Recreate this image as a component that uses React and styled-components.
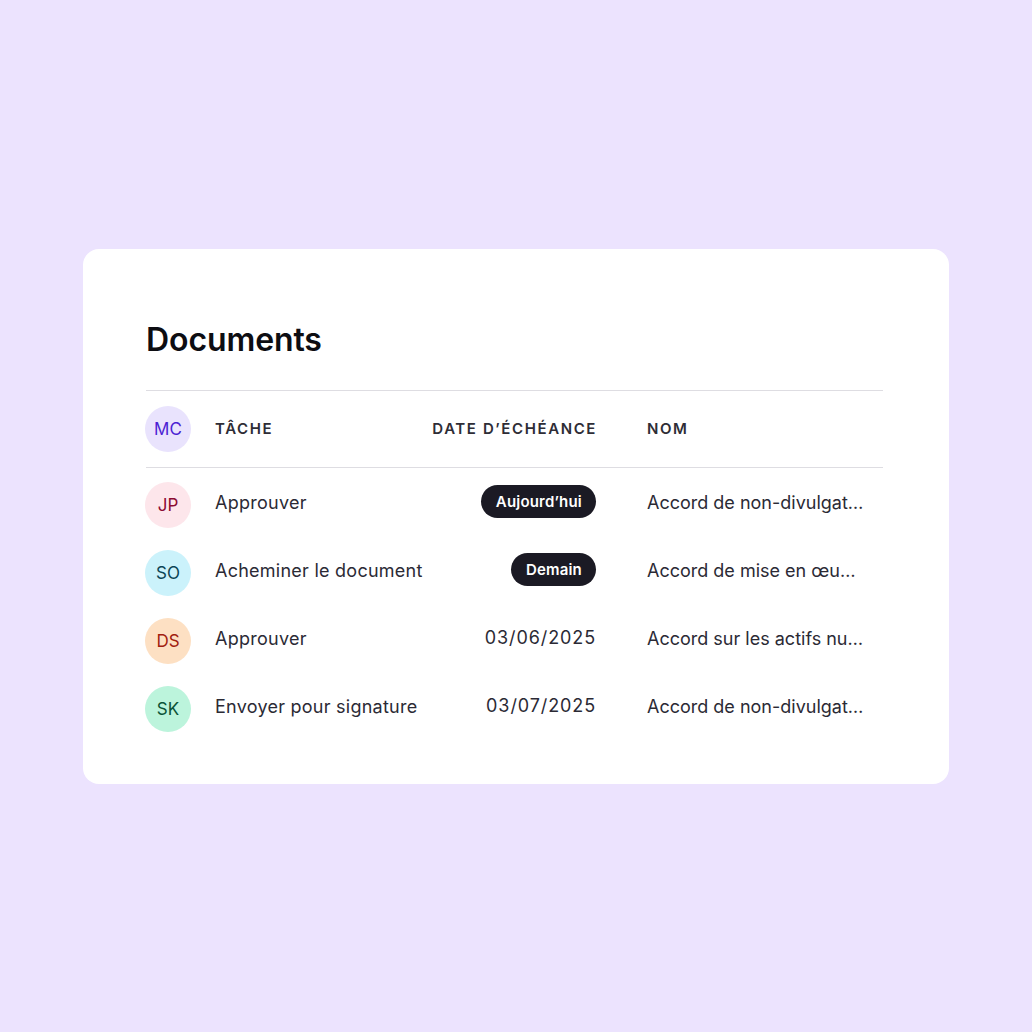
import styled, { createGlobalStyle } from "styled-components";

const GlobalStyle = createGlobalStyle`
  html, body {
    margin: 0;
    padding: 0;
    background: #ece3fe;
  }
  body {
    font-family: Inter, "Noto Sans", sans-serif;
    -webkit-font-smoothing: antialiased;
  }
`;

const AVATAR_COLORS = {
  violet: { bg: "#e9e3fd", fg: "#4c1fd3" },
  pink: { bg: "#fde6eb", fg: "#8c0b32" },
  cyan: { bg: "#cbf2fb", fg: "#0b4656" },
  orange: { bg: "#fde0c3", fg: "#a2200f" },
  green: { bg: "#bcf4dc", fg: "#0b5337" },
};

const rows = [
  { initials: "JP", color: "pink", task: "Approuver", due: "Aujourd’hui", pill: true, name: "Accord de non-divulgation" },
  { initials: "SO", color: "cyan", task: "Acheminer le document", due: "Demain", pill: true, name: "Accord de mise en œuvre" },
  { initials: "DS", color: "orange", task: "Approuver", due: "03/06/2025", name: "Accord sur les actifs numériques" },
  { initials: "SK", color: "green", task: "Envoyer pour signature", due: "03/07/2025", name: "Accord de non-divulgation" },
];

export default function App() {
  return (
    <Page>
      <GlobalStyle />
      <Card>
        <Title>Documents</Title>
        <HeaderRow>
          <Avatar color="violet">MC</Avatar>
          <HeadCell>Tâche</HeadCell>
          <HeadCell align="right">Date d’échéance</HeadCell>
          <HeadCell>Nom</HeadCell>
        </HeaderRow>
        <Body>
          {rows.map((r, i) => (
            <Row key={i}>
              <Avatar color={r.color}>{r.initials}</Avatar>
              <TaskCell>{r.task}</TaskCell>
              <DateCell>{r.pill ? <Pill>{r.due}</Pill> : r.due}</DateCell>
              <NameCell>{r.name}</NameCell>
            </Row>
          ))}
        </Body>
      </Card>
    </Page>
  );
}

const Page = styled.div`
  width: 1032px;
  height: 1032px;
  display: flex;
  align-items: center;
  justify-content: center;
`;

const Card = styled.section`
  width: 866px;
  box-sizing: border-box;
  background: #fff;
  border-radius: 16px;
  padding: 71px 66px 41px 63px;
`;

const Title = styled.h1`
  margin: 0 0 30px 0;
  font-size: 32px;
  line-height: 40px;
  font-weight: 600;
  color: #0d0d12;
  letter-spacing: -0.1px;
`;

const grid = `
  display: grid;
  grid-template-columns: 46px 1fr auto 236px;
  align-items: center;
`;

const HeaderRow = styled.div`
  ${grid}
  height: 76px;
  border-top: 1px solid #dedde2;
  border-bottom: 1px solid #dedde2;
`;

const HeadCell = styled.div`
  font-size: 15px;
  font-weight: 600;
  text-transform: uppercase;
  letter-spacing: 1.6px;
  color: #2e2d36;
  text-align: ${(p) => p.align || "left"};
  &:nth-child(2) { padding-left: 23px; }
  &:nth-child(3) { padding-right: 50px; }
`;

const Body = styled.div`
  padding-top: 3px;
`;

const Row = styled.div`
  ${grid}
  height: 68px;
`;

const Avatar = styled.div`
  width: 46px;
  height: 46px;
  margin-left: -1px;
  border-radius: 50%;
  display: flex;
  align-items: center;
  justify-content: center;
  font-size: 17px;
  font-weight: 400;
  background: ${(p) => AVATAR_COLORS[p.color].bg};
  color: ${(p) => AVATAR_COLORS[p.color].fg};
`;

const TaskCell = styled.div`
  padding-left: 23px;
  padding-bottom: 4px;
  font-size: 18px;
  letter-spacing: 0.25px;
  color: #2b2a35;
  white-space: nowrap;
`;

const DateCell = styled.div`
  padding-right: 51px;
  padding-bottom: 6px;
  text-align: right;
  font-size: 18px;
  letter-spacing: 0.9px;
  color: #2b2a35;
`;

const Pill = styled.span`
  display: inline-flex;
  align-items: center;
  height: 33px;
  padding: 0 14px 0 15px;
  border-radius: 17px;
  background: #1b1a24;
  color: #fff;
  font-size: 15px;
  font-weight: 600;
  letter-spacing: 0.2px;
`;

const NameCell = styled.div`
  width: 218px;
  padding-bottom: 4px;
  font-size: 18px;
  color: #2b2a35;
  white-space: nowrap;
  overflow: hidden;
  text-overflow: ellipsis;
`;
